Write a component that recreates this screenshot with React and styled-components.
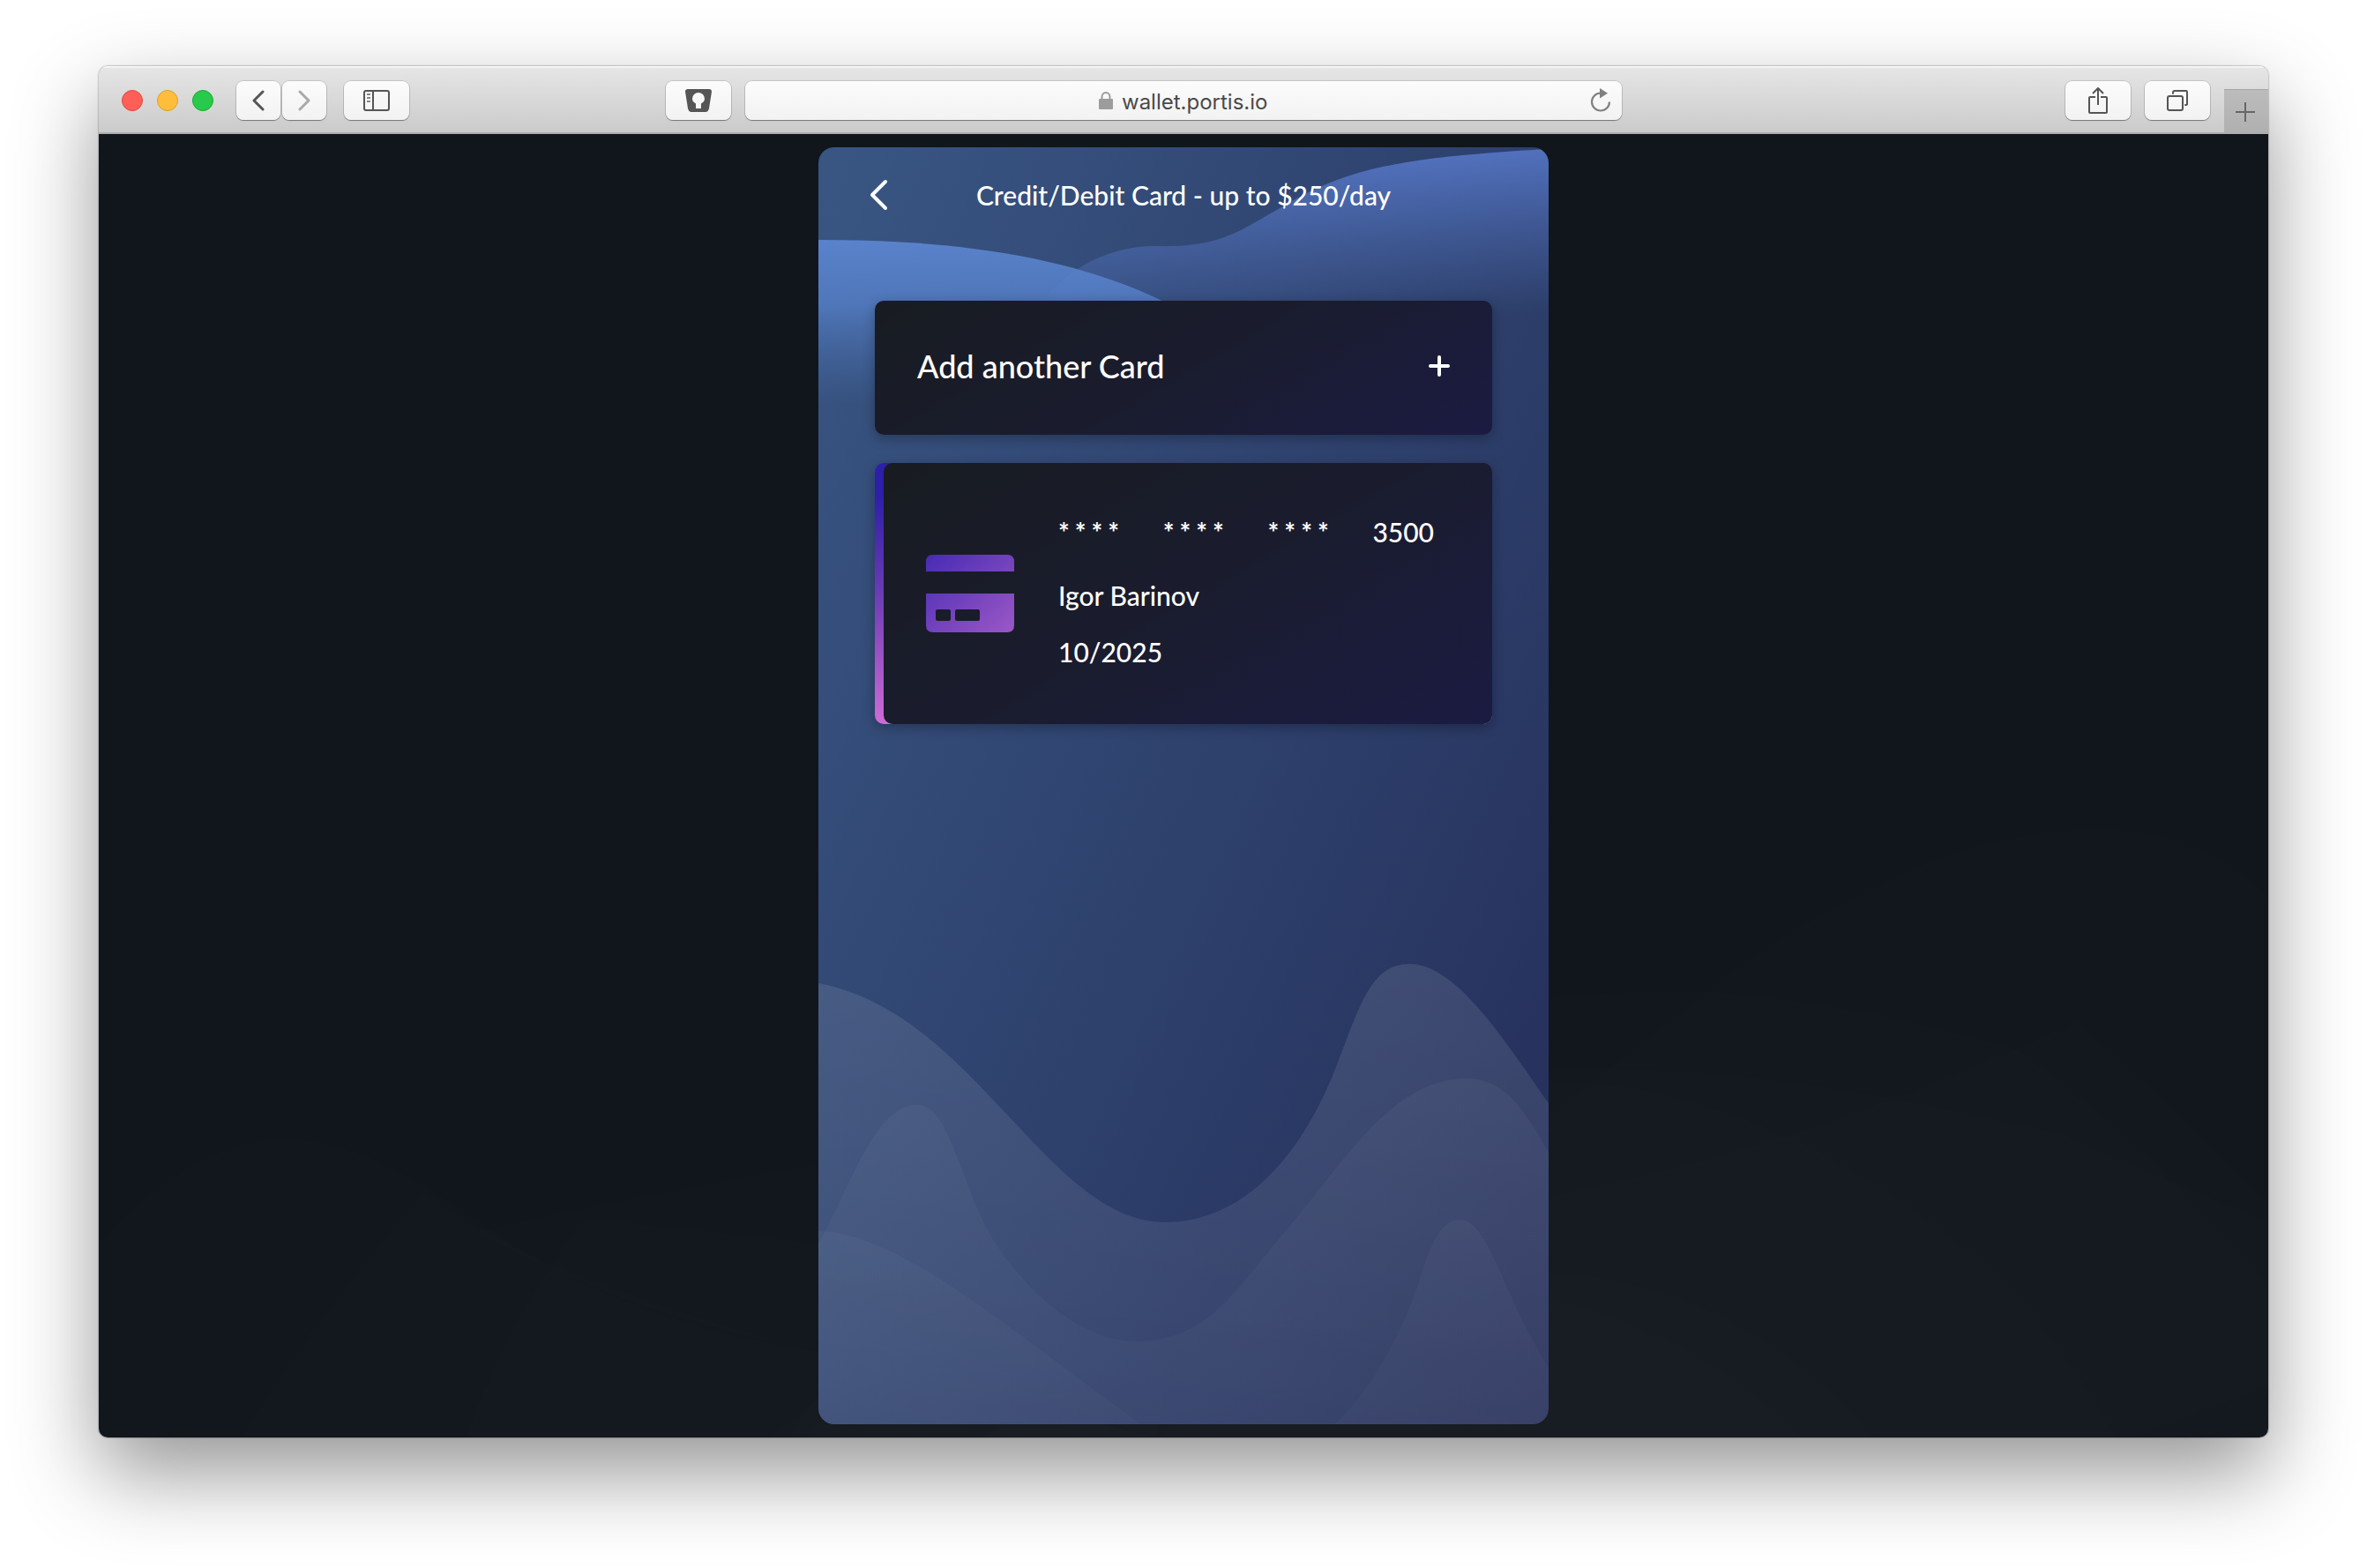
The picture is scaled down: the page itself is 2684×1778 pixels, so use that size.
import React from "react";
import styled, { createGlobalStyle, css } from "styled-components";

const GlobalStyle = createGlobalStyle`
  *, *::before, *::after { box-sizing: border-box; }
  body { margin: 0; background: #fff; }
  button { font: inherit; color: inherit; cursor: pointer; }
`;

const Desktop = styled.div`
  min-height: 100vh;
  display: flex;
  padding: 75px 112px 148px;
  overflow: hidden;
  font-family: Futura, "Futura PT", Lato, "Open Sans", sans-serif;
`;

const Window = styled.section`
  flex: 1;
  min-width: 0;
  display: flex;
  flex-direction: column;
  border-radius: 10px;
  overflow: hidden;
  box-shadow: 0 0 2px rgba(0, 0, 0, 0.6), 0 40px 96px rgba(0, 0, 0, 0.42);
`;

/* ---------- browser chrome ---------- */

const Toolbar = styled.header`
  display: grid;
  grid-template-columns: 1fr minmax(0, 994px) 1fr;
  height: 77px;
  background: linear-gradient(#e6e6e6, #cbcbcb);
  border-bottom: 2px solid #adadad;
  box-shadow: inset 0 2px 0 #f4f4f4;
  color: #555;
`;

const ToolbarSide = styled.div`
  display: flex;
  align-items: center;
  justify-content: ${(p) => p.$justify};
  padding: 3px ${(p) => p.$right}px 0 ${(p) => p.$left}px;
  gap: 16px;
`;

const AddressCell = styled.div`
  display: flex;
  align-items: center;
  padding-top: 3px;
`;

const Cluster = styled.div`
  display: flex;
  align-items: center;
  gap: ${(p) => p.$gap}px;
`;

const Light = styled.button`
  width: 24px;
  height: 24px;
  padding: 0;
  border-radius: 50%;
  background: ${(p) => p.$fill};
  border: 1px solid ${(p) => p.$edge};
`;

const raised = css`
  border: 0;
  border-radius: 8px;
  background: linear-gradient(#fcfcfc, #f2f2f2);
  box-shadow: 0 0 0 1px rgba(0, 0, 0, 0.12), 0 1px 1px rgba(0, 0, 0, 0.35);
`;

const ToolButton = styled.button`
  ${raised}
  display: grid;
  place-items: center;
  width: ${(p) => p.$width}px;
  height: 44px;
  padding: 0;
  color: ${(p) => (p.disabled ? "#a9a9a9" : "#555")};
`;

const AddressBar = styled.form`
  ${raised}
  flex: 1;
  height: 44px;
  display: grid;
  grid-template-columns: 1fr auto 1fr;
  align-items: center;
  padding: 0 12px;
`;

const Location = styled.label`
  grid-column: 2;
  display: flex;
  align-items: center;
  gap: 10px;
`;

const LocationInput = styled.input`
  width: 166px;
  height: 44px;
  padding: 3px 0 0;
  border: 0;
  outline: 0;
  background: transparent;
  color: #4a4a4a;
  font: 400 24px/40px Inter, sans-serif;
`;

const ReloadButton = styled.button`
  justify-self: end;
  display: grid;
  padding: 0;
  border: 0;
  background: none;
  color: #808080;
`;

const NewTab = styled.button`
  align-self: flex-end;
  display: grid;
  place-items: center;
  width: 50px;
  height: 49px;
  padding: 2px 2px 0 0;
  border: 0;
  border-top: 1px solid #a6a6a6;
  background: linear-gradient(#bcbcbc, #b0b0b0);
  color: #666;
`;

/* ---------- page ---------- */

const Page = styled.main`
  position: relative;
  flex: 1;
  display: flex;
  justify-content: center;
  padding: 15px 16px;
  background: #11151c;
`;

const Backdrop = styled.svg`
  position: absolute;
  inset: 0;
  width: 100%;
  height: 100%;
`;

const Phone = styled.div`
  position: relative;
  flex: 0 1 828px;
  border-radius: 18px;
  overflow: hidden;
  background: linear-gradient(115deg, #395683, #242d58);
  color: #fff;
`;

const Content = styled.div`
  position: relative;
`;

const TitleBar = styled.div`
  display: grid;
  grid-template-columns: 40px 1fr 40px;
  align-items: center;
  height: 110px;
  padding: 0 52px 2px;
`;

const BackButton = styled.button`
  display: grid;
  padding: 0 4px;
  border: 0;
  background: none;
`;

const Title = styled.h1`
  margin: 0;
  text-align: center;
  font-size: 30px;
  line-height: 40px;
  font-weight: 500;
`;

const CardList = styled.div`
  display: flex;
  flex-direction: column;
  gap: 32px;
  padding: 64px 64px 32px;
`;

const surface = css`
  border: 0;
  border-radius: 10px;
  color: #fff;
  background: linear-gradient(150deg, #181c21, #1a1c2e 50%, #1b1b42);
  box-shadow: 0 4px 14px rgba(0, 0, 0, 0.28);
`;

const AddCard = styled.button`
  ${surface}
  display: flex;
  align-items: center;
  justify-content: space-between;
  height: 152px;
  padding: 0 48px 4px;
  font-size: 36px;
  line-height: 48px;
  font-weight: 500;
`;

const SavedFrame = styled.div`
  padding-left: 10px;
  border-radius: 10px;
  background: linear-gradient(#2c1fa8 12%, #6c3cb4 50%, #cf6bd6);
  box-shadow: 0 4px 14px rgba(0, 0, 0, 0.28);
`;

const SavedCard = styled.button`
  ${surface}
  box-shadow: none;
  display: flex;
  align-items: center;
  gap: 50px;
  width: 100%;
  height: 296px;
  padding: 0 66px 0 48px;
  text-align: left;
  font-size: 30px;
  line-height: 40px;
  font-weight: 500;
`;

const Details = styled.span`
  flex: 1;
  display: flex;
  flex-direction: column;
  padding-bottom: 4px;
`;

const NumberRow = styled.span`
  display: flex;
  justify-content: space-between;
  margin-bottom: 32px;
`;

const Mask = styled.span`
  display: flex;
  gap: 6px;
  font-weight: 700;
`;

const Holder = styled.span`
  margin-bottom: 24px;
`;

function PhoneWaves() {
  return (
    <Backdrop viewBox="0 0 828 1448" preserveAspectRatio="none" aria-hidden="true">
      <defs>
        <linearGradient id="crestLeft" gradientUnits="userSpaceOnUse" x1="0" y1="105" x2="0" y2="290">
          <stop offset="0" stopColor="#5b85d0" stopOpacity="0.95" />
          <stop offset="0.4" stopColor="#5782cb" stopOpacity="0.75" />
          <stop offset="1" stopColor="#4a70b4" stopOpacity="0" />
        </linearGradient>
        <linearGradient id="crestRight" gradientUnits="userSpaceOnUse" x1="640" y1="10" x2="650" y2="196">
          <stop offset="0" stopColor="#5a7cd0" stopOpacity="0.82" />
          <stop offset="1" stopColor="#5274c0" stopOpacity="0" />
        </linearGradient>
        <linearGradient id="hill" gradientUnits="userSpaceOnUse" x1="0" y1="926" x2="0" y2="1448">
          <stop offset="0" stopColor="#fff" stopOpacity="0.1" />
          <stop offset="1" stopColor="#fff" stopOpacity="0.06" />
        </linearGradient>
        <linearGradient id="hillSoft" gradientUnits="userSpaceOnUse" x1="0" y1="1056" x2="0" y2="1448">
          <stop offset="0" stopColor="#fff" stopOpacity="0.04" />
          <stop offset="1" stopColor="#fff" stopOpacity="0.018" />
        </linearGradient>
      </defs>
      <path
        fill="url(#crestRight)"
        d="M240 200C262 150 318 112 382 112C455 114 475 96 520 71C590 29 640 12 828 2V200Z"
      />
      <path fill="url(#crestLeft)" d="M0 105C180 105 315 130 420 190V290H0Z" />
      <path
        fill="url(#hill)"
        d="M0 948C176 980 260 1219 393 1219C490 1219 555 1130 590 1035C615 970 628 926 670 926C720 926 770 1000 828 1084V1448H0Z"
      />
      <path
        fill="url(#hillSoft)"
        d="M0 1244C40 1170 65 1086 112 1086C140 1086 150 1130 182 1208C205 1262 280 1354 360 1354C440 1354 470 1300 534 1224C592 1156 650 1056 734 1056C778 1056 800 1090 828 1140V1448H0Z"
      />
      <path fill="url(#hillSoft)" d="M0 1229C95 1229 240 1360 366 1448H0Z" />
      <path
        fill="url(#hillSoft)"
        d="M586 1448C625 1410 660 1350 682 1284C692 1250 705 1216 727 1216C760 1216 775 1300 828 1384V1448Z"
      />
    </Backdrop>
  );
}

function PageWaves() {
  return (
    <Backdrop viewBox="0 0 2460 1478" preserveAspectRatio="none" aria-hidden="true">
      <g fill="#fff" fillOpacity="0.007">
        <path d="M1200 1478C1646 1112 1706 1063 1821 973C1980 850 2140 788 2266 788C2350 790 2410 815 2460 866V1478Z" />
        <path d="M428 1245C667 1190 816 1173 1000 1130C1250 1060 1500 972 1809 972C1947 980 2061 1006 2176 1038C2290 1124 2380 1210 2460 1304V1478H1200Q1000 1420 816 1380Q600 1340 428 1245Z" />
        <path d="M760 1478C1100 1200 1400 1060 1718 1060C1869 1060 2049 1092 2230 1135C2350 1187 2400 1210 2460 1235V1420L2310 1478Z" />
        <path d="M800 1478C1000 1290 1400 1240 1646 1204C1809 1175 2050 1100 2242 1006C2350 1095 2400 1150 2460 1210V1478Z" />
        <path d="M780 1478C1000 1160 1400 1060 1718 1078C1929 1110 2110 1240 2200 1347Q2250 1410 2287 1478Z" />
        <path d="M1000 1478C1300 1290 1500 1280 1646 1290C1800 1300 1920 1370 2013 1478Z" />
        <path d="M1000 1478C1300 1330 1500 1300 1646 1321C1760 1350 1860 1400 1929 1478Z" />
        <path d="M0 1259C70 1180 140 1140 212 1140C320 1140 400 1220 523 1292Q667 1360 816 1380L1200 1478H0Z" />
        <path d="M161 1478Q248 1337 368 1199Q500 1300 816 1380L1200 1478Z" />
        <path d="M416 1478Q457 1360 547 1229L1200 1300V1478Z" />
      </g>
    </Backdrop>
  );
}

const Stroke = ({ w, h, d, sw = 3, children, ...rest }) => (
  <svg
    width={w}
    height={h}
    viewBox={`0 0 ${w} ${h}`}
    fill="none"
    stroke="currentColor"
    strokeWidth={sw}
    strokeLinecap="round"
    strokeLinejoin="round"
    aria-hidden="true"
    {...rest}
  >
    {d && <path d={d} />}
    {children}
  </svg>
);

const SidebarIcon = () => (
  <Stroke w={30} h={24} sw={2} d="M3 1H27Q29 1 29 3V21Q29 23 27 23H3Q1 23 1 21V3Q1 1 3 1ZM11 1V23">
    <path d="M4 5H8M4 9H8M4 13H8" strokeLinecap="butt" stroke="#888" />
  </Stroke>
);

const KeyholeIcon = () => (
  <svg width="30" height="26" viewBox="0 0 30 26" aria-hidden="true">
    <path
      fill="currentColor"
      fillRule="evenodd"
      d="M3 0H27Q30 0 30 3L27 22Q26 26 23 26H7Q4 26 3 22L0 3Q0 0 3 0ZM15 4A7 7 0 0 0 8 11Q8 14 12 16.500V22H18V16.500Q22 14 22 11A7 7 0 0 0 15 4Z"
    />
  </svg>
);

const LockIcon = () => (
  <svg width="16" height="20" viewBox="0 0 16 20" aria-hidden="true">
    <path d="M3.500 9V6A4.500 5 0 0 1 12.500 6V9" fill="none" stroke="#9c9c9c" strokeWidth="2" />
    <rect y="8" width="16" height="12" rx="1" fill="#9c9c9c" />
  </svg>
);

const ReloadIcon = () => (
  <svg width="24" height="28" viewBox="0 0 24 28" aria-hidden="true">
    <path d="M13 5.500H12A10 10 0 1 0 22 15.500" fill="none" stroke="currentColor" strokeWidth="2.200" />
    <path d="M11 0L20 5.700L11 11.500Z" fill="currentColor" />
  </svg>
);

const ShareIcon = () => (
  <Stroke w={24} h={32} sw={2} strokeLinecap="butt" d="M9 12H3Q2 12 2 13V29Q2 30 3 30H21Q22 30 22 29V13Q22 12 21 12H15M12 21V3M6 8L12 2L18 8" />
);

const TabsIcon = () => (
  <Stroke w={24} h={24} sw={2} d="M3 7H16Q18 7 18 9V21Q18 23 16 23H3Q1 23 1 21V9Q1 7 3 7Z">
    <path d="M7 4V3Q7 1 9 1H22Q23 1 23 3V16Q23 17 21 17" />
  </Stroke>
);

const CreditCardIcon = () => (
  <svg width="100" height="88" viewBox="0 0 100 88" aria-hidden="true">
    <defs>
      <linearGradient id="cardFill" x1="0" y1="0" x2="1" y2="1">
        <stop offset="0" stopColor="#472bb4" />
        <stop offset="1" stopColor="#9c58c6" />
      </linearGradient>
    </defs>
    <path
      fill="url(#cardFill)"
      fillRule="evenodd"
      d="M8 0H92Q100 0 100 8V19H0V8Q0 0 8 0ZM0 44H100V80Q100 88 92 88H8Q0 88 0 80ZM13 62Q11 62 11 64V73Q11 75 13 75H26Q28 75 28 73V64Q28 62 26 62ZM35 62Q33 62 33 64V73Q33 75 35 75H59Q61 75 61 73V64Q61 62 59 62Z"
    />
  </svg>
);

const MaskedGroup = () => (
  <Mask>
    {["a", "b", "c", "d"].map((k) => (
      <span key={k}>*</span>
    ))}
  </Mask>
);

export default function App() {
  return (
    <Desktop>
      <GlobalStyle />
      <Window>
        <Toolbar>
          <ToolbarSide $justify="space-between" $left={26} $right={16}>
            <Cluster $gap={26}>
              <Cluster $gap={16}>
                <Light aria-label="Close" $fill="#ff5f57" $edge="#e2463f" />
                <Light aria-label="Minimise" $fill="#ffbd3c" $edge="#dfa023" />
                <Light aria-label="Zoom" $fill="#28ca4b" $edge="#1aab2c" />
              </Cluster>
              <Cluster $gap={20}>
                <Cluster $gap={2}>
                  <ToolButton $width={50} aria-label="Back">
                    <Stroke w={14} h={24} d="M12 2L2 12L12 22" />
                  </ToolButton>
                  <ToolButton $width={50} aria-label="Forward" disabled>
                    <Stroke w={14} h={24} d="M2 2L12 12L2 22" />
                  </ToolButton>
                </Cluster>
                <ToolButton $width={74} aria-label="Sidebar">
                  <SidebarIcon />
                </ToolButton>
              </Cluster>
            </Cluster>
            <ToolButton $width={74} aria-label="Passwords">
              <KeyholeIcon />
            </ToolButton>
          </ToolbarSide>
          <AddressCell>
            <AddressBar onSubmit={(e) => e.preventDefault()}>
              <Location>
                <LockIcon />
                <LocationInput aria-label="Address" defaultValue="wallet.portis.io" />
              </Location>
              <ReloadButton type="button" aria-label="Reload">
                <ReloadIcon />
              </ReloadButton>
            </AddressBar>
          </AddressCell>
          <ToolbarSide $justify="flex-end" $left={16} $right={0}>
            <ToolButton $width={74} aria-label="Share">
              <ShareIcon />
            </ToolButton>
            <ToolButton $width={74} aria-label="Show tabs">
              <TabsIcon />
            </ToolButton>
            <NewTab aria-label="New tab">
              <Stroke w={24} h={24} sw={2} strokeLinecap="butt" d="M12 1V23M1 12H23" />
            </NewTab>
          </ToolbarSide>
        </Toolbar>
        <Page>
          <PageWaves />
          <Phone>
            <PhoneWaves />
            <Content>
              <TitleBar>
                <BackButton aria-label="Go back">
                  <Stroke w={24} h={36} sw={4} d="M20 3L5 18L20 33" />
                </BackButton>
                <Title>Credit/Debit Card - up to $250/day</Title>
              </TitleBar>
              <CardList>
                <AddCard>
                  <span>Add another Card</span>
                  <Stroke w={24} h={24} sw={4} d="M12 2V22M2 12H22" />
                </AddCard>
                <SavedFrame>
                  <SavedCard>
                    <CreditCardIcon />
                    <Details>
                      <NumberRow>
                        <MaskedGroup />
                        <MaskedGroup />
                        <MaskedGroup />
                        <span>3500</span>
                      </NumberRow>
                      <Holder>Igor Barinov</Holder>
                      <span>10/2025</span>
                    </Details>
                  </SavedCard>
                </SavedFrame>
              </CardList>
            </Content>
          </Phone>
        </Page>
      </Window>
    </Desktop>
  );
}
